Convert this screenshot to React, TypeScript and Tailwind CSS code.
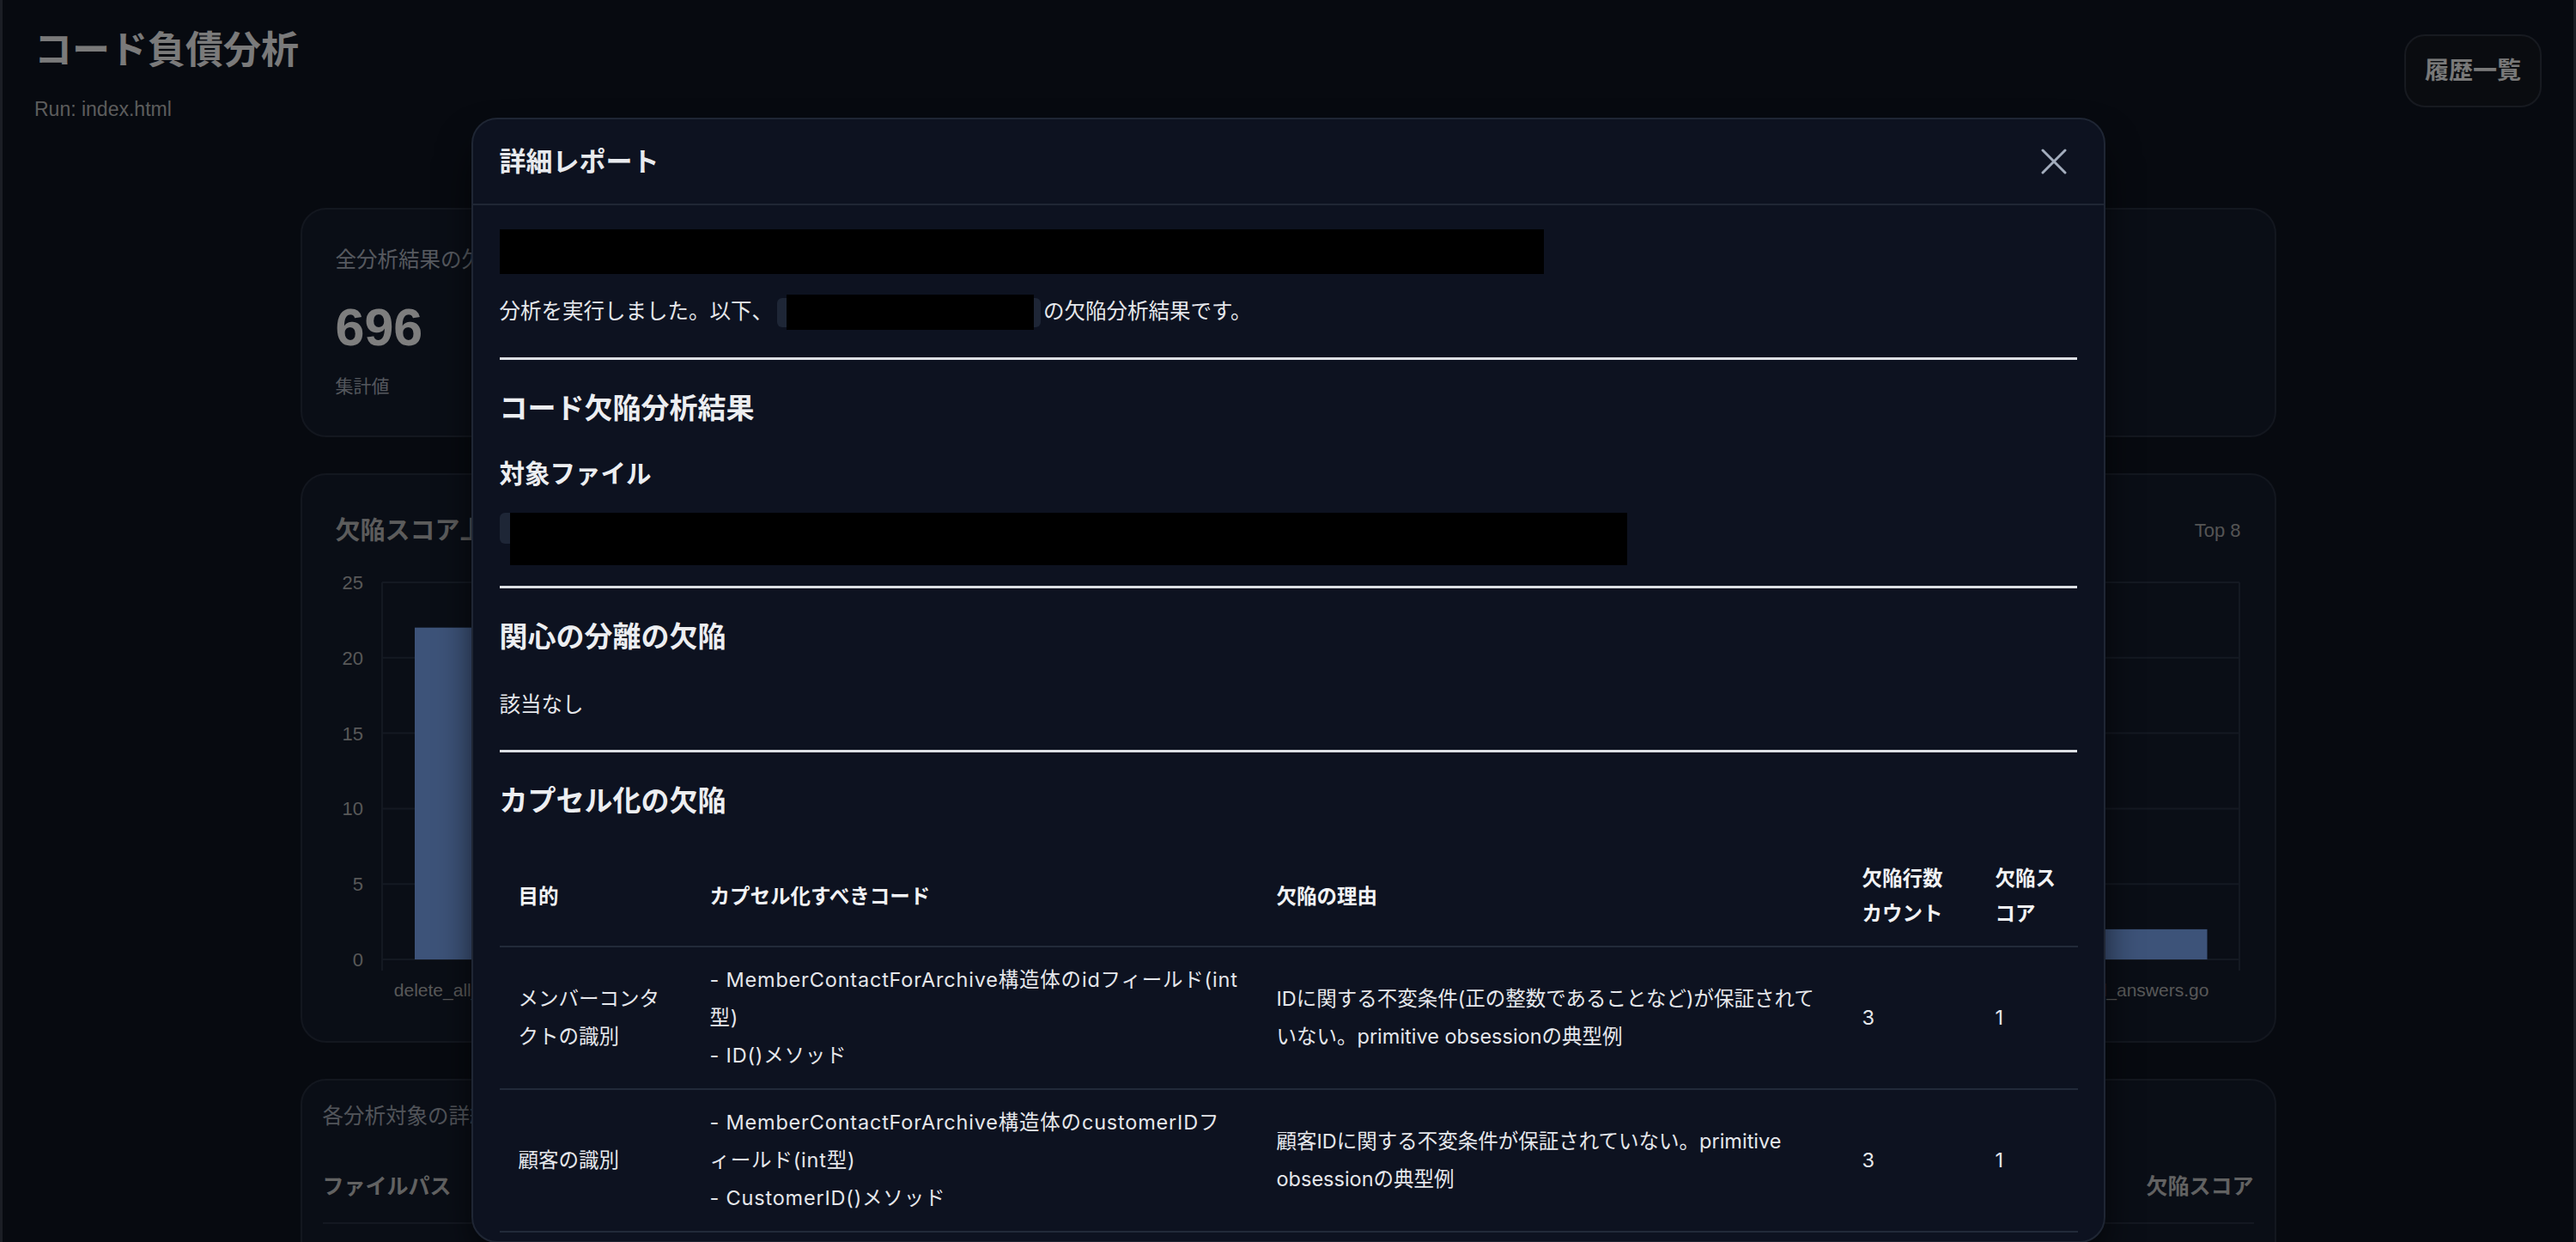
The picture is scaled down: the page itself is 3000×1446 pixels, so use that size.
import React from 'react';

// 背景ダッシュボード用のデータ
const stats = [
  { label: '全分析結果の欠陥スコア合計', value: '696', note: '集計値' },
  { label: '平均欠陥スコア', value: '87', note: '1ファイルあたり' },
  { label: '最大欠陥スコア', value: '22', note: 'delete_all_answers.go' },
  { label: '分析対象ファイル数', value: '8', note: '件' },
];

const bars = [
  { name: 'delete_all_answers_v2.go', value: 22 },
  { name: 'archive_member.go', value: 18 },
  { name: 'member_contact.go', value: 14 },
  { name: 'customer_repo.go', value: 11 },
  { name: 'export_csv.go', value: 8 },
  { name: 'import_users.go', value: 6 },
  { name: 'notify_mail.go', value: 4 },
  { name: 'fetch_all_answers.go', value: 2 },
];

const defects = [
  {
    purpose: 'メンバーコンタクトの識別',
    code: ['- MemberContactForArchive構造体のidフィールド(int型)', '- ID()メソッド'],
    reason: 'IDに関する不変条件(正の整数であることなど)が保証されていない。primitive obsessionの典型例',
    lines: 3,
    score: 1,
  },
  {
    purpose: '顧客の識別',
    code: ['- MemberContactForArchive構造体のcustomerIDフィールド(int型)', '- CustomerID()メソッド'],
    reason: '顧客IDに関する不変条件が保証されていない。primitive obsessionの典型例',
    lines: 3,
    score: 1,
  },
  {
    purpose: 'アーカイブ日時の管理',
    code: ['- archivedAtフィールド(time.Time型)'],
    reason: '日時の妥当性チェックが各所に散在している',
    lines: 2,
    score: 1,
  },
];

function BarChart() {
  const W = 2218;
  const H = 510;
  const axisX = 54;
  const baseY = 456;
  const unit = 17.56;
  const slot = (W - axisX) / 8;
  const ticks = [0, 5, 10, 15, 20, 25];
  return (
    <svg width={W} height={H} className="block">
      {ticks.map((t) => (
        <g key={t}>
          <line x1={axisX} x2={W - 1} y1={baseY - t * unit} y2={baseY - t * unit} stroke="#283244" strokeWidth={2} />
          <text x={32} y={baseY - t * unit + 8} textAnchor="end" fontSize={22} fill="#b0b0b0" fontFamily="Liberation Sans, sans-serif">
            {t}
          </text>
        </g>
      ))}
      <line x1={axisX} x2={axisX} y1={17} y2={469} stroke="#283244" strokeWidth={2} />
      <line x1={W - 1} x2={W - 1} y1={17} y2={469} stroke="#283244" strokeWidth={2} />
      {bars.map((b, i) => {
        const x = axisX + i * slot;
        const h = b.value * unit;
        return (
          <g key={b.name}>
            <rect x={x + 38} y={baseY - h} width={194} height={h} fill="#7aa6f2" />
            <text x={x + slot / 2} y={499} textAnchor="middle" fontSize={21} fill="#b0b0b0" fontFamily="Liberation Sans, sans-serif">
              {b.name}
            </text>
          </g>
        );
      })}
    </svg>
  );
}

function Redacted({ className }: { className: string }) {
  return <span className={`block bg-black ${className}`} />;
}

export default function App() {
  return (
    <div className="relative h-[1446px] w-full overflow-hidden border-x-[3px] border-[#1b1e25] bg-[#0f1421] font-['Liberation_Sans','Noto_Sans_CJK_JP',sans-serif]">
      {/* 背景のダッシュボード */}
      <header className="flex items-start justify-between pl-[37px] pr-[37px] pt-[32px]">
        <div>
          <h1 className="text-[44px] font-bold leading-[53px] text-[#f5f5f5]">コード負債分析</h1>
          <p className="mt-[26px] text-[23px] leading-[32px] text-[#b8b8b8]">Run: index.html</p>
        </div>
        <button className="mt-[8px] flex h-[85px] w-[160px] items-center justify-center rounded-[24px] border-2 border-[#2e3440] bg-[#141820] text-[28px] font-semibold text-[#f2f2f2]">
          履歴一覧
        </button>
      </header>

      <main className="mx-auto mt-[99px] w-[2301px]">
        <div className="grid grid-cols-4 gap-[30px]">
          {stats.map((s) => (
            <div key={s.label} className="h-[267px] rounded-[30px] border-2 border-[#262e3e] bg-[#141c2d] px-[39px] pt-[41px]">
              <div className="text-[24.5px] leading-[36px] text-[#acb3bf]">{s.label}</div>
              <div className="mt-[30px] text-[61px] font-bold leading-[60px] text-[#fdfdfd]">{s.value}</div>
              <div className="mt-[24px] text-[21px] leading-[30px] text-[#a9afba]">{s.note}</div>
            </div>
          ))}
        </div>

        <div className="mt-[42px] h-[663px] rounded-[30px] border-2 border-[#262e3e] bg-[#141c2d] px-[39px] pt-[45px]">
          <div className="flex items-center justify-between">
            <div className="text-[29px] font-semibold leading-[40px] text-[#b8b8b8]">欠陥スコア上位ファイル</div>
            <div className="text-[22px] leading-[30px] text-[#a8a8a8]">Top 8</div>
          </div>
          <div className="mt-[23px]">
            <BarChart />
          </div>
        </div>

        <div className="mt-[42px] rounded-[30px] border-2 border-[#262e3e] bg-[#141c2d] px-[24px] pt-[24px]">
          <div className="text-[24.5px] leading-[36px] text-[#a2a8b3]">各分析対象の詳細スコア</div>
          <div className="mt-[25px] flex justify-between border-b-2 border-[#283142] pb-[24px] pt-[20px] text-[25px] font-semibold leading-[36px] text-[#c4c4c4]">
            <span>ファイルパス</span>
            <span>欠陥スコア</span>
          </div>
          <div className="flex justify-between py-[24px] text-[24.5px] leading-[36px] text-[#d8d8d8]">
            <span>delete_all_answers.go</span>
            <span>22</span>
          </div>
        </div>
      </main>

      {/* モーダル */}
      <div className="absolute inset-0 bg-black/50" />
      <div className="absolute inset-0 flex justify-center pt-[137px]">
        <div className="flex h-[1310px] w-[1903px] flex-col overflow-hidden rounded-[30px] border-2 border-[#1f2634] bg-[#0d1220] font-['Inter','Noto_Sans_CJK_JP',sans-serif] shadow-2xl shadow-black">
          <div className="flex h-[100px] shrink-0 items-center justify-between border-b-2 border-[#1f2634] pl-[31px] pr-[42px]">
            <h2 className="text-[31px] font-semibold text-[#e8eaee]">詳細レポート</h2>
            <button className="flex h-[32px] w-[32px] items-center justify-center">
              <svg width="30" height="30" viewBox="0 0 30 30" fill="none" stroke="#a3adbd" strokeWidth="3" strokeLinecap="round">
                <path d="M2 2 28 28M28 2 2 28" />
              </svg>
            </button>
          </div>

          <div className="flex-1 overflow-y-auto px-[31px] pt-[28px] text-[#e5e7eb] [scrollbar-width:none]">
            <Redacted className="h-[52px] w-[1216px]" />
            <p className="mt-[22px] text-[24.5px] leading-[43px]">
              分析を実行しました。以下、
              <span className="relative ml-[5px] mr-[3px] inline-block h-[34px] w-[307px] rounded-[6px] bg-[#1e2636] align-middle">
                <span className="absolute left-[11px] top-[-4px] h-[41px] w-[288px] bg-black" />
              </span>
              の欠陥分析結果です。
            </p>
            <hr className="mt-[32px] h-[3px] border-0 bg-[#dcdfe4]" />

            <h2 className="mt-[35px] text-[33px] font-bold leading-[43px] text-[#eceef1]">コード欠陥分析結果</h2>
            <h3 className="mt-[35px] text-[29.5px] font-bold leading-[38px] text-[#eceef1]">対象ファイル</h3>
            <div className="relative mt-[27px] h-[61px]">
              <div className="mt-[15px] h-[36px] w-[1300px] rounded-[6px] bg-[#1e2636]" />
              <span className="absolute left-[12px] top-0 h-[61px] w-[1301px] bg-black" />
            </div>
            <hr className="mt-[24px] h-[3px] border-0 bg-[#dcdfe4]" />

            <h2 className="mt-[35px] text-[33px] font-bold leading-[43px] text-[#eceef1]">関心の分離の欠陥</h2>
            <p className="mt-[36px] text-[24.5px] leading-[43px]">該当なし</p>
            <hr className="mt-[31px] h-[3px] border-0 bg-[#dcdfe4]" />

            <h2 className="mt-[35px] text-[33px] font-bold leading-[43px] text-[#eceef1]">カプセル化の欠陥</h2>
            <table className="mt-[31px] w-full table-fixed border-collapse">
              <colgroup>
                <col className="w-[223px]" />
                <col className="w-[660px]" />
                <col className="w-[682px]" />
                <col className="w-[155px]" />
                <col className="w-[118px]" />
              </colgroup>
              <thead>
                <tr className="border-b-2 border-[#222a39]">
                  {['目的', 'カプセル化すべきコード', '欠陥の理由', '欠陥行数カウント', '欠陥スコア'].map((h) => (
                    <th key={h} className="px-[22px] py-[17px] text-left align-middle text-[23.5px] font-bold leading-[41px] text-[#f1f2f4]">
                      {h}
                    </th>
                  ))}
                </tr>
              </thead>
              <tbody>
                {defects.map((d) => (
                  <tr key={d.purpose} className="border-b-2 border-[#222a39] text-[23.5px] leading-[44px]">
                    <td className="px-[22px] py-[16px] align-middle">{d.purpose}</td>
                    <td className="px-[22px] py-[16px] align-middle tracking-[0.8px]">
                      {d.code.map((c, i) => (
                        <React.Fragment key={c}>
                          {i > 0 && <br />}
                          {c}
                        </React.Fragment>
                      ))}
                    </td>
                    <td className="px-[22px] py-[16px] align-middle">{d.reason}</td>
                    <td className="px-[22px] py-[16px] align-middle">{d.lines}</td>
                    <td className="px-[22px] py-[16px] align-middle">{d.score}</td>
                  </tr>
                ))}
              </tbody>
            </table>
          </div>
        </div>
      </div>
    </div>
  );
}
